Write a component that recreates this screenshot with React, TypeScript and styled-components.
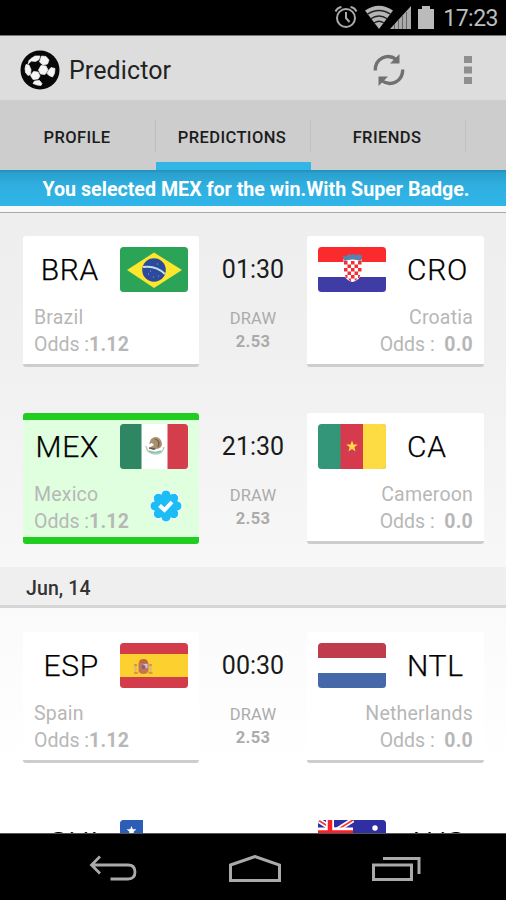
import React from 'react';
import styled, { createGlobalStyle } from 'styled-components';

const GlobalStyle = createGlobalStyle`
  * { box-sizing: border-box; }
  body { margin: 0; background: #000; font-family: Roboto, "Open Sans", sans-serif; }
  svg { display: block; flex: none; }
`;

const Screen = styled.div`
  display: flex;
  flex-direction: column;
  width: 506px;
  height: 900px;
  overflow: hidden;
  background: #000;
`;

const StatusBar = styled.header`
  display: flex;
  flex: none;
  align-items: center;
  justify-content: flex-end;
  gap: 8px;
  height: 35px;
  padding: 0 8px 0 0;
`;

const SystemIcons = styled.div`
  display: flex;
  gap: 7px;
  padding-bottom: 1px;
`;

const Clock = styled.span`
  color: #bdbdbd;
  font-size: 23px;
  line-height: 34px;
  letter-spacing: -0.5px;
  padding-top: 3px;
`;

const ActionBar = styled.div`
  display: flex;
  flex: none;
  align-items: center;
  height: 65px;
  padding: 4px 34px 0 20px;
  background: #ddd;
  border-top: 1px solid #777;
`;

const Title = styled.h1`
  flex: 1;
  margin: 0 0 0 9px;
  color: #222;
  font-size: 25px;
  font-weight: 400;
  line-height: 30px;
  letter-spacing: 0.1px;
  padding-top: 2px;
`;

const ActionIcons = styled.div`
  display: flex;
  align-items: center;
  gap: 59px;
`;

const Tabs = styled.nav`
  display: flex;
  flex: none;
  height: 70px;
  padding-left: 1px;
  background: #cdcdcd;
`;

const Tab = styled.div<{ $active?: boolean }>`
  display: flex;
  width: 155px;
  padding-top: 20px;
  border-bottom: 8px solid ${(p) => (p.$active ? '#33b5e5' : 'transparent')};
`;

const TabLabel = styled.span`
  flex: 1;
  height: 32px;
  padding-right: 2px;
  border-right: 1px solid #bfbfbf;
  color: #1c1c1c;
  font-size: 16.500px;
  font-weight: 500;
  line-height: 35px;
  letter-spacing: 0.4px;
  text-align: center;
`;

const Banner = styled.div`
  flex: none;
  height: 36px;
  padding-left: 6px;
  background: linear-gradient(#1f8fbd 0, #2ba0cd 3px, #2fafe0 16px, #30b5e8 100%);
  color: #fff;
  font-size: 19.650px;
  font-weight: 700;
  line-height: 40px;
  text-align: center;
  white-space: nowrap;
`;

const List = styled.main`
  flex: 1;
  min-height: 0;
  overflow: hidden;
  border-top: 6px solid #f8f8f8;
  background: linear-gradient(#eee 0%, #f0f0f0 22%, #f7f7f7 55%, #fcfcfc 72%, #fff 90%);
  box-shadow: inset 0 1px 0 #aaa;
`;

const Match = styled.section`
  display: grid;
  grid-template-columns: 176px 108px 177px;
  height: 177px;
  padding: 24px 22px 22px 23px;
`;

const DateHeader = styled.h2`
  height: 42px;
  margin: 0;
  padding-left: 26px;
  background: #efefef;
  background-clip: padding-box;
  border-top: 1px solid transparent;
  border-bottom: 3px solid #d5d5d5;
  color: #333;
  font-size: 19.500px;
  font-weight: 500;
  line-height: 43px;
  letter-spacing: 0.1px;
`;

const Card = styled.article<{ $selected?: boolean; $away?: boolean }>`
  display: flex;
  flex-direction: column;
  height: 131px;
  padding: ${(p) => (p.$selected ? 4 : 11)}px 11px 0 11px;
  border-radius: 3px;
  background: ${(p) => (p.$selected ? '#dfffdf' : '#fff')};
  border-top: ${(p) => (p.$selected ? '7px solid #20cd20' : '0')};
  border-bottom: ${(p) => (p.$selected ? '7px solid #20cd20' : '3px solid #cdcdcd')};
  text-align: ${(p) => (p.$away ? 'right' : 'left')};
`;

const TeamTop = styled.div<{ $away?: boolean }>`
  display: flex;
  flex-direction: ${(p) => (p.$away ? 'row-reverse' : 'row')};
  justify-content: flex-end;
  gap: 21px;
  height: 45px;
`;

const Code = styled.strong`
  color: #000;
  font-size: 30px;
  font-weight: 300;
  line-height: 45px;
  letter-spacing: 0.7px;
  -webkit-text-stroke: 0.25px #000;
`;

const TeamBottom = styled.div<{ $away?: boolean }>`
  display: flex;
  align-items: flex-start;
  justify-content: ${(p) => (p.$away ? 'flex-end' : 'space-between')};
  padding: 13px ${(p) => (p.$away ? 0 : 5)}px 0 0;
`;

const BadgeSlot = styled.div`
  padding-top: 7px;
`;

const Details = styled.div`
  color: #b7b7b7;
  font-size: 19.500px;
  line-height: 26.500px;
  letter-spacing: 0.2px;
  white-space: pre;
`;

const Odds = styled.div`
  letter-spacing: 0;
  b { font-weight: 700; letter-spacing: 0.2px; }
`;

const Center = styled.div`
  display: flex;
  flex-direction: column;
  align-items: center;
  padding-top: 17px;
`;

const Time = styled.time`
  color: #1a1a1a;
  font-size: 25px;
  line-height: 34px;
`;

const Draw = styled.div`
  margin-top: 20px;
  color: #ababab;
  font-size: 16.500px;
  line-height: 23px;
  letter-spacing: 0.2px;
  text-align: center;
  b { display: block; letter-spacing: 0.3px; }
`;

const NavBar = styled.footer`
  display: flex;
  flex: none;
  align-items: center;
  justify-content: space-between;
  height: 67px;
  padding: 3px 85px 0 89px;
  border-top: 1px solid #555;
`;

type FlagName = 'br' | 'hr' | 'mx' | 'cm' | 'es' | 'nl' | 'cl' | 'au';

const STAR = 'M0-6L1.5-2H5.8L2.4.8 3.6 5 0 2.5-3.6 5-2.4.8-5.8-2H-1.5Z';

const flagArt: Record<FlagName, React.ReactNode> = {
  br: (
    <>
      <rect width="68" height="45" fill="#2ba457" />
      <path d="M7 23L34 5.500L62 23L34 41Z" fill="#fce62e" />
      <circle cx="34" cy="23" r="11.800" fill="#2c4a9b" />
      <path d="M23 20Q36 18 45 27" fill="none" stroke="#bfe0e8" strokeWidth="2" />
      <path d="M28 27h1M33 30h1M38 29h1M30 24h1M37 17h1" stroke="#8fa6d8" strokeWidth="1" />
    </>
  ),
  hr: (
    <>
      <rect width="68" height="45" fill="#fff" />
      <rect width="68" height="15" fill="#fb2b2d" />
      <rect y="30" width="68" height="15" fill="#3f3da5" />
      <path d="M25.500 12h18v13q-1 8-9 10q-8-2-9-10Z" fill="#fff" />
      <path
        d="M26 14h3.500v3.500H26zM33 14h3.500v3.500H33zM40 14h3.500v3.500H40zM29.500 17.500H33V21h-3.500zM36.500 17.500H40V21h-3.500zM26 21h3.500v3.500H26zM33 21h3.500v3.500H33zM40 21h3.500v3.500H40zM29.500 24.500H33V28h-3.500zM36.500 24.500H40V28h-3.500zM27 28h2.500v3H28zM33 28h3.500v3.500H33zM40 28h2.300l-1.300 3h-1zM30 31.500h3V34h-1zM36.500 31.500h3L37 34z"
        fill="#f22d36"
      />
      <path d="M24.500 8.500l4 1 2-2.500 3 1 2-1 3 1.500 2-1.500 4 2-2 5q-8-3-16 0Z" fill="#4b88b8" />
      <path d="M28 10v3M33 9v3M37 9v3M42 10v3" stroke="#9a6682" />
    </>
  ),
  mx: (
    <>
      <rect width="68" height="45" fill="#fff" />
      <rect width="21.500" height="45" fill="#2f8663" />
      <rect x="47.500" width="20.500" height="45" fill="#d43d4b" />
      <path d="M26 22q1 8 9 8t9-7" fill="none" stroke="#b9cbb6" strokeWidth="1.500" />
      <path d="M31 15q5-4 9 0q4 5 0 9l-7 2-4-2 5-3-2-2-3 1Z" fill="#a98f70" />
      <path d="M35 15q6 2 3 8M29 24l6 1" fill="none" stroke="#6b5b4a" strokeWidth="1.300" />
      <path d="M29 27q6 3 12 0" fill="none" stroke="#7cc3bd" strokeWidth="1.500" />
    </>
  ),
  cm: (
    <>
      <rect width="68" height="45" fill="#349678" />
      <rect x="22.500" width="22.500" height="45" fill="#d53a4d" />
      <rect x="45" width="23" height="45" fill="#fddb43" />
      <path d={STAR} transform="translate(34 22.500)" fill="#ffd84a" />
    </>
  ),
  es: (
    <>
      <rect width="68" height="45" fill="#d33c4a" />
      <rect y="11" width="68" height="23" fill="#fcd02f" />
      <path d="M15.500 21v9M30.500 21v9" stroke="#d9b384" strokeWidth="2" />
      <path d="M14 30h4M28.500 30h4M14 22h3M29 22h3" stroke="#c98a50" strokeWidth="1.300" />
      <path d="M18.500 20h10v8q-1 3-5 3t-5-3Z" fill="#c9744d" />
      <path d="M19 20q0-4 4.500-4t4.500 4Z" fill="#bc6848" />
      <rect x="23.500" y="21" width="4" height="4" fill="#d8bfd0" />
      <circle cx="23.500" cy="24" r="2" fill="#68679c" />
    </>
  ),
  nl: (
    <>
      <rect width="68" height="45" fill="#fff" />
      <rect width="68" height="15" fill="#c03c4c" />
      <rect y="30" width="68" height="15" fill="#4667a8" />
    </>
  ),
  cl: (
    <>
      <rect width="68" height="45" fill="#fff" />
      <rect width="23" height="23" fill="#2c5eb5" />
      <rect y="23" width="68" height="22" fill="#d33c4a" />
      <path d={STAR} transform="translate(11.500 11) scale(.85)" fill="#fff" />
    </>
  ),
  au: (
    <>
      <rect width="68" height="45" fill="#2f2fa2" />
      <path d="M0 0L35 22M35 0L0 22" stroke="#fff" strokeWidth="5" />
      <path d="M0 0L35 22M35 0L0 22" stroke="#f5333f" strokeWidth="1.700" />
      <path d="M12 0v23M0 11.500h35" stroke="#fff" strokeWidth="8" />
      <path d="M12 0v23M0 12.500h35" stroke="#fb1f25" strokeWidth="4.500" />
      <circle cx="57" cy="8" r="2.700" fill="#fff" />
    </>
  ),
};

const Flag = ({ name }: { name: FlagName }) => (
  <svg width="68" height="45" viewBox="0 0 68 45">
    <defs>
      <clipPath id={`flag-${name}`}>
        <rect width="68" height="45" rx="3.500" />
      </clipPath>
    </defs>
    <g clipPath={`url(#flag-${name})`}>{flagArt[name]}</g>
  </svg>
);

const SuperBadge = () => (
  <svg width="34" height="34" viewBox="-17 -17 34 34">
    <g fill="#1cbcf7" stroke="#fff" strokeWidth="1">
      {Array.from({ length: 8 }, (_, i) => (
        <circle key={i} cx="0" cy="-11" r="5" transform={`rotate(${i * 45})`} />
      ))}
    </g>
    <circle r="12.500" fill="#1cbcf7" />
    <path d="M-6.500-.5L-1.500 4L6-4" fill="none" stroke="#fff" strokeWidth="4" />
  </svg>
);

interface TeamData {
  code: string;
  name?: string;
  flag: FlagName;
  selected?: boolean;
}

const Team = ({ team, away }: { team: TeamData; away?: boolean }) => (
  <Card $selected={team.selected} $away={away}>
    <TeamTop $away={away}>
      <Code>{team.code}</Code>
      <Flag name={team.flag} />
    </TeamTop>
    {team.name && (
      <TeamBottom $away={away}>
        <Details>
          <div>{team.name}</div>
          <Odds>
            {away ? 'Odds :  ' : 'Odds :'}
            <b>{away ? '0.0' : '1.12'}</b>
          </Odds>
        </Details>
        {team.selected && (
          <BadgeSlot>
            <SuperBadge />
          </BadgeSlot>
        )}
      </TeamBottom>
    )}
  </Card>
);

const MatchRow = ({ home, away, time }: { home: TeamData; away: TeamData; time?: string }) => (
  <Match>
    <Team team={home} />
    <Center>
      {time && (
        <>
          <Time>{time}</Time>
          <Draw>
            DRAW<b>2.53</b>
          </Draw>
        </>
      )}
    </Center>
    <Team team={away} away />
  </Match>
);

const AlarmIcon = () => (
  <svg width="24" height="24" viewBox="0 0 24 24" fill="none" stroke="#aaa" strokeWidth="2">
    <circle cx="12" cy="13" r="9" />
    <path d="M12 7v6l3.500 4M1.500 6.500q2-4 6-4.500M22.500 6.500q-2-4-6-4.500" />
  </svg>
);

const SignalIcons = () => (
  <svg width="70" height="24" viewBox="0 0 70 24">
    <path d="M0 5.500Q14-4 28 5.500L14 24Z" fill="#b5b5b5" />
    <path d="M2 9.500Q14 1.500 26 9.500M5.500 14Q14 8 22.500 14M9 18Q14 14.500 19 18" fill="none" stroke="#222" strokeWidth="1.300" />
    <path d="M25 24L46 1V24Z" fill="#aaa" />
    <path d="M29.500 19v5M33.500 15v9M37.500 11v13M41.500 7v17" stroke="#666" strokeWidth="1" />
    <path d="M53 4h4V1h8v3h4v20H53Z" fill="#bbb" />
  </svg>
);

const BallIcon = () => (
  <svg width="40" height="40" viewBox="0 0 40 40">
    <circle cx="20" cy="20" r="19.500" fill="#080808" />
    <g fill="#f4f4f4" stroke="#f4f4f4" strokeWidth=".7" strokeLinejoin="round">
      <path d="M11 8.500L15 6l5 0-1 3.500-3.500 2-4-.5-3.500 3 1-3.500Z" />
      <path d="M21.500 6l4.500.5 3 3.500-1.500 4-4.500 1-3.500-3Z" />
      <path d="M21 15.500l5 .5 2 4-3 4.500-4.500-.500-2-4Z" />
      <path d="M6 14.500l3 .5 2 4.500-.5 5-2.500 1-2.500-3-.5-4Z" />
      <path d="M13.500 21.500l4.500.5 2 4-2 3-5 .500-2.500-4Z" />
      <path d="M28.500 20.500l2.500-3 4 1-.5 5-2 3.500-3.500-1.500-2-2Z" />
      <path d="M14.500 31l5-.5 2.500 3-1 2-4-.5-4-1.500Z" />
    </g>
  </svg>
);

const RefreshIcon = () => (
  <svg width="32" height="34" viewBox="0 0 32 34">
    <g fill="none" stroke="#707070" strokeWidth="3.400">
      <path d="M2.300 17.500C2 6 14-.5 23.500 6.500" />
      <path d="M29.700 16.500C30 28 18 34.500 8.500 27.500" />
    </g>
    <path d="M26.500 1V10.500H17ZM5.500 33V23.500H15Z" fill="#707070" />
  </svg>
);

const OverflowIcon = () => (
  <svg width="8" height="30" viewBox="0 0 8 30" fill="#8f8f8f">
    <rect y="1" width="8" height="7" />
    <rect y="11.500" width="8" height="7" />
    <rect y="22" width="8" height="7" />
  </svg>
);

const BackIcon = () => (
  <svg width="48" height="28" viewBox="0 0 48 28" fill="none" stroke="#aaa" strokeWidth="2.800">
    <path d="M11 1.500L2.500 10L11 18.500M2.500 10H39q7 0 7 7t-7 7H21.500" />
  </svg>
);

const HomeIcon = () => (
  <svg width="52" height="28" viewBox="0 0 52 28" fill="none" stroke="#aaa" strokeWidth="3">
    <path d="M1.500 10L26 1.500L50.500 10V25.500H1.500Z" />
  </svg>
);

const RecentIcon = () => (
  <svg width="49" height="26" viewBox="0 0 49 26" fill="none" stroke="#aaa" strokeWidth="3">
    <path d="M1.500 9H39.500V23.500H1.500ZM11 2.500H47V18" />
  </svg>
);

const App = () => (
  <Screen>
    <GlobalStyle />
    <StatusBar>
      <SystemIcons>
        <AlarmIcon />
        <SignalIcons />
      </SystemIcons>
      <Clock>17:23</Clock>
    </StatusBar>
    <ActionBar>
      <BallIcon />
      <Title>Predictor</Title>
      <ActionIcons>
        <RefreshIcon />
        <OverflowIcon />
      </ActionIcons>
    </ActionBar>
    <Tabs>
      <Tab><TabLabel>PROFILE</TabLabel></Tab>
      <Tab $active><TabLabel>PREDICTIONS</TabLabel></Tab>
      <Tab><TabLabel>FRIENDS</TabLabel></Tab>
    </Tabs>
    <Banner>You selected MEX for the win.With Super Badge.</Banner>
    <List>
      <MatchRow
        home={{ code: 'BRA', name: 'Brazil', flag: 'br' }}
        away={{ code: 'CRO', name: 'Croatia', flag: 'hr' }}
        time="01:30"
      />
      <MatchRow
        home={{ code: 'MEX', name: 'Mexico', flag: 'mx', selected: true }}
        away={{ code: 'CA', name: 'Cameroon', flag: 'cm' }}
        time="21:30"
      />
      <DateHeader>Jun, 14</DateHeader>
      <MatchRow
        home={{ code: 'ESP', name: 'Spain', flag: 'es' }}
        away={{ code: 'NTL', name: 'Netherlands', flag: 'nl' }}
        time="00:30"
      />
      <MatchRow
        home={{ code: 'CHI', flag: 'cl' }}
        away={{ code: 'AUS', flag: 'au' }}
      />
    </List>
    <NavBar>
      <BackIcon />
      <HomeIcon />
      <RecentIcon />
    </NavBar>
  </Screen>
);

export default App;
